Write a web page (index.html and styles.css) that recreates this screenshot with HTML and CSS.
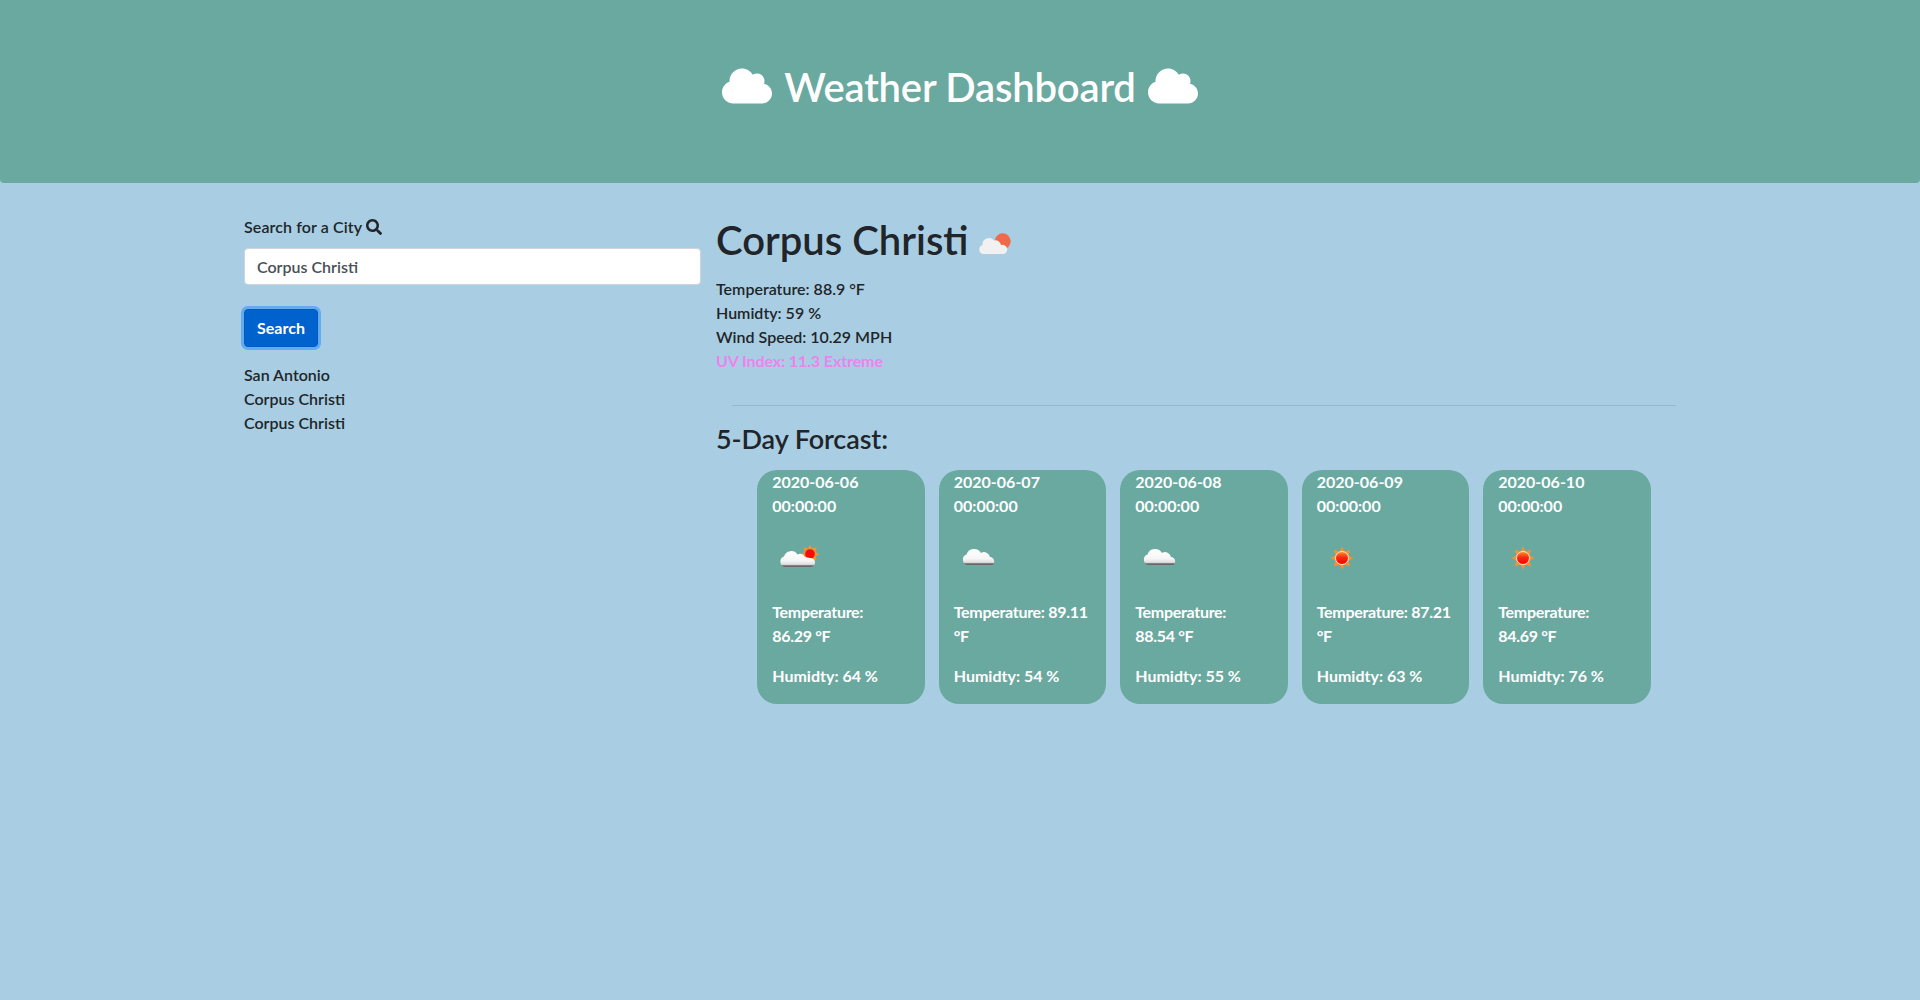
FILE: index.html
```html
<!DOCTYPE html>
<html>

<head>
    <meta charset="utf-8">
    <title>Weather Dashboard</title>
    <link rel="stylesheet" href="styles.css">
</head>

<body>
    <svg class="defs" width="0" height="0">
        <defs>
            <linearGradient id="cloud-fill" x1="0" y1="0" x2="0" y2="1">
                <stop offset="0" stop-color="#ffffff" />
                <stop offset="0.6" stop-color="#f6f6f6" />
                <stop offset="0.84" stop-color="#dedede" />
                <stop offset="0.88" stop-color="#8c8c8c" />
                <stop offset="1" stop-color="#5c5c5c" />
            </linearGradient>
            <linearGradient id="sun-fill" x1="0" y1="0" x2="0" y2="1">
                <stop offset="0" stop-color="#f79a2e" />
                <stop offset="0.45" stop-color="#fb2a10" />
                <stop offset="1" stop-color="#f40000" />
            </linearGradient>
            <symbol id="cloud" viewBox="0 0 640 512">
                <path d="M537.6 226.6c4.1-10.7 6.4-22.4 6.4-34.6 0-53-43-96-96-96-19.7 0-38.1 6-53.3 16.2C367 64.2 315.3 32 256 32c-88.4 0-160 71.6-160 160 0 2.7.1 5.4.2 8.1C40.2 219.8 0 273.2 0 336c0 79.5 64.5 144 144 144h368c70.7 0 128-57.3 128-128 0-61.9-44-113.6-102.4-125.4z" />
            </symbol>
            <symbol id="icon-sun" viewBox="0 0 50 50">
                <path fill="#f7932e" d="M25 13.500l3 6h-6zM25 36.500l-3-6h6zM13.500 25l6-3v6zM36.500 25l-6 3v-6zM16.800 16.800l6.400 2-4.400 4.400zM33.200 33.200l-6.400-2 4.400-4.400zM33.200 16.800l-2 6.400-4.400-4.400zM16.800 33.200l2-6.400 4.400 4.400z" />
                <circle cx="25" cy="25" r="6.500" fill="url(#sun-fill)" stroke="#fde5d0" stroke-width="1" />
            </symbol>
            <symbol id="icon-clouds" viewBox="0 0 50 50">
                <path fill="url(#cloud-fill)" d="M13 32A5.500 5.500 0 0 1 12.500 21.500A8 8 0 0 1 27 20A6 6 0 0 1 36 24A4.500 4.500 0 0 1 38.500 32Z" />
            </symbol>
            <symbol id="icon-few" viewBox="0 0 50 50">
                <path fill="#f7932e" d="M38 11.500l2.500 5h-5zM38 30.500l-2.500-5h5zM28.500 21l5-2.500v5zM47.500 21l-5 2.500v-5zM31.300 14.300l5.400 1.600-3.800 3.800zM44.700 27.700l-5.400-1.600 3.800-3.800zM44.700 14.300l-1.600 5.400-3.800-3.800zM31.300 27.700l1.600-5.400 3.800 3.800z" />
                <circle cx="38" cy="21" r="4.800" fill="#f70c06" />
                <path fill="url(#cloud-fill)" d="M12.500 34A5.500 5.500 0 0 1 12 23.500A7.500 7.500 0 0 1 25.500 21.500A6 6 0 0 1 33 24L38 25A4.500 4.500 0 0 1 39 34Z" />
            </symbol>
        </defs>
    </svg>

    <header class="banner">
        <svg class="banner-icon"><use href="#cloud" /></svg>
        <h1>Weather Dashboard</h1>
        <svg class="banner-icon"><use href="#cloud" /></svg>
    </header>

    <div class="container">
        <aside class="search-col">
            <label class="search-label" for="city">Search for a City
                <svg class="search-icon" viewBox="0 0 512 512">
                    <path d="M505 442.700L405.300 343c-4.500-4.500-10.600-7-17-7H372c27.600-35.300 44-79.700 44-128C416 93.100 322.900 0 208 0S0 93.100 0 208s93.100 208 208 208c48.300 0 92.700-16.400 128-44v16.300c0 6.400 2.500 12.500 7 17l99.700 99.700c9.400 9.400 24.600 9.400 33.900 0l28.300-28.300c9.400-9.400 9.400-24.600.1-34zM208 336c-70.700 0-128-57.200-128-128 0-70.700 57.200-128 128-128 70.700 0 128 57.200 128 128 0 70.700-57.200 128-128 128z" />
                </svg>
            </label>
            <input class="search-input" id="city" type="text" value="Corpus Christi">
            <button class="search-btn" type="button">Search</button>
            <ul class="history">
                <li>San Antonio</li>
                <li>Corpus Christi</li>
                <li>Corpus Christi</li>
            </ul>
        </aside>

        <main class="weather-col">
            <h1 class="city-name">Corpus Christi
                <svg class="city-icon" viewBox="0 0 32 22">
                    <circle cx="23.700" cy="8.300" r="8" fill="#ee6a49" />
                    <path fill="#f1f1f1" d="M4.500 21A4.500 4.500 0 0 1 3.500 12.200A6.500 6.500 0 0 1 15 7.500A5.500 5.500 0 0 1 22 12A4.500 4.500 0 0 1 25 21Z" />
                </svg>
            </h1>
            <div class="today">
                <div>Temperature: 88.9 °F</div>
                <div>Humidty: 59 %</div>
                <div>Wind Speed: 10.29 MPH</div>
                <div class="uv">UV Index: 11.3 Extreme</div>
            </div>
            <hr class="divider">
            <h3 class="forecast-title">5-Day Forcast:</h3>
            <div class="forecast">
                <div class="card">
                    <p class="card-date">2020-06-06 00:00:00</p>
                    <svg class="card-icon"><use href="#icon-few" /></svg>
                    <p class="card-temp">Temperature:<br>86.29 °F</p>
                    <p class="card-hum">Humidty: 64 %</p>
                </div>
                <div class="card">
                    <p class="card-date">2020-06-07 00:00:00</p>
                    <svg class="card-icon"><use href="#icon-clouds" /></svg>
                    <p class="card-temp">Temperature: 89.11<br>°F</p>
                    <p class="card-hum">Humidty: 54 %</p>
                </div>
                <div class="card">
                    <p class="card-date">2020-06-08 00:00:00</p>
                    <svg class="card-icon"><use href="#icon-clouds" /></svg>
                    <p class="card-temp">Temperature:<br>88.54 °F</p>
                    <p class="card-hum">Humidty: 55 %</p>
                </div>
                <div class="card">
                    <p class="card-date">2020-06-09 00:00:00</p>
                    <svg class="card-icon"><use href="#icon-sun" /></svg>
                    <p class="card-temp">Temperature: 87.21<br>°F</p>
                    <p class="card-hum">Humidty: 63 %</p>
                </div>
                <div class="card">
                    <p class="card-date">2020-06-10 00:00:00</p>
                    <svg class="card-icon"><use href="#icon-sun" /></svg>
                    <p class="card-temp">Temperature:<br>84.69 °F</p>
                    <p class="card-hum">Humidty: 76 %</p>
                </div>
            </div>
        </main>
    </div>
</body>

</html>
```

FILE: styles.css
```css
html,
body {
    margin: 0;
    height: 100%;
}

body {
    background-color: #a9cee3;
    color: #212529;
    font-family: "Lato", "Open Sans", sans-serif;
    font-size: 16px;
    line-height: 24px;
    overflow: hidden;
}

.defs {
    display: block;
    height: 0;
}

.banner {
    background-color: #6aa9a0;
    color: white;
    height: 183px;
    box-sizing: border-box;
    padding-top: 60px;
    border-radius: 0 0 4px 4px;
    display: flex;
    justify-content: center;
    align-items: flex-start;
    gap: 12px;
}

.banner h1 {
    margin: 0;
    font-size: 40px;
    font-weight: 600;
    letter-spacing: -0.2px;
    line-height: 54px;
}

.banner-icon {
    width: 50px;
    height: 40px;
    margin-top: 6px;
    fill: white;
}

.container {
    width: 1463px;
    margin-left: 229px;
    display: flex;
}

.search-col {
    width: 487px;
    box-sizing: border-box;
    padding: 32px 15px 0;
}

.search-label {
    display: block;
    margin-bottom: 9px;
    font-weight: 600;
    letter-spacing: 0.1px;
}

.search-icon {
    width: 16px;
    height: 16px;
    vertical-align: -2px;
    fill: #212529;
}

.search-input {
    display: block;
    width: 100%;
    height: 37px;
    box-sizing: border-box;
    padding: 0 12px;
    border: 1px solid #ced4da;
    border-radius: 4px;
    background: white;
    color: #495057;
    font: 600 16px "Lato", "Open Sans", sans-serif;
}

.search-btn {
    display: block;
    margin-top: 24px;
    width: 74px;
    height: 38px;
    padding-bottom: 3px;
    border: 1px solid #005cbf;
    border-radius: 4px;
    background-color: #0062cc;
    color: white;
    box-shadow: 0 0 0 3px #62aaf2;
    font: 700 16px "Lato", "Open Sans", sans-serif;
}

.history {
    list-style: none;
    margin: 16px 0 0;
    padding: 0;
    font-weight: 600;
}

.weather-col {
    flex: 1;
    padding-top: 33px;
}

.city-name {
    margin: 0 0 13px;
    font-size: 40px;
    font-weight: 600;
    line-height: 48px;
}

.city-icon {
    width: 32px;
    height: 22px;
    vertical-align: 0;
}

.today {
    font-weight: 600;
}

.uv {
    color: violet;
    font-weight: 700;
    letter-spacing: -0.1px;
}

.divider {
    margin: 32px 16px 16px;
    border: 0;
    border-top: 1px solid rgba(0, 0, 0, 0.1);
}

.forecast-title {
    margin: 0 0 14px;
    font-size: 27px;
    font-weight: 600;
    letter-spacing: -0.1px;
    line-height: 34px;
}

.forecast {
    display: flex;
    justify-content: center;
    gap: 14px;
}

.card {
    width: 167.5px;
    height: 234px;
    box-sizing: border-box;
    padding: 0 15px;
    border-radius: 20px;
    background-color: #6aa9a0;
    color: white;
    font-weight: 700;
}

.card p {
    margin: 0;
}

.card-date {
    height: 48px;
}

.card-icon {
    display: block;
    width: 50px;
    height: 50px;
    margin: 15px 0 17px;
}

.card .card-temp {
    height: 48px;
    margin-bottom: 16px;
    letter-spacing: -0.3px;
    white-space: nowrap;
}
```
